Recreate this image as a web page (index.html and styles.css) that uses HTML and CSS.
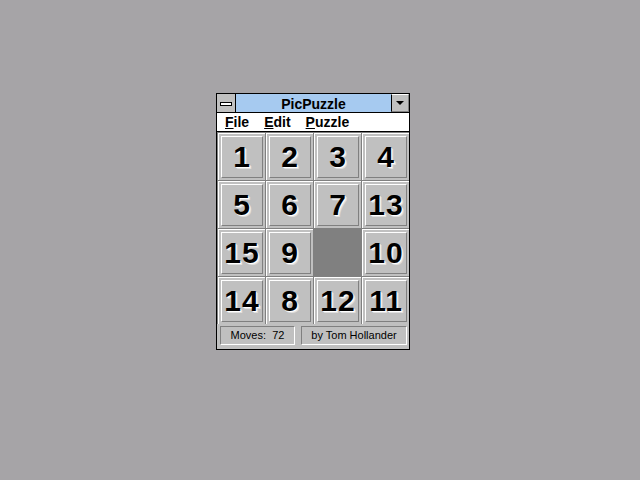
FILE: index.html
```html
<!DOCTYPE html>
<html>
  <head>
    <title>PicPuzzle</title>
    <link rel="stylesheet" href="styles.css">
  </head>
  <body>
    <div class="window">
      <div class="titlebar">
        <div class="sysmenu"><span class="sysbar"></span></div>
        <div class="title">PicPuzzle</div>
        <div class="minbtn"><span class="arrow"></span></div>
      </div>
      <div class="menubar">
        <span class="menu-item"><u>F</u>ile</span>
        <span class="menu-item"><u>E</u>dit</span>
        <span class="menu-item"><u>P</u>uzzle</span>
      </div>
      <div class="board">
        <div class="cell"><div class="tile">1</div></div>
        <div class="cell"><div class="tile">2</div></div>
        <div class="cell"><div class="tile">3</div></div>
        <div class="cell"><div class="tile">4</div></div>
        <div class="cell"><div class="tile">5</div></div>
        <div class="cell"><div class="tile">6</div></div>
        <div class="cell"><div class="tile">7</div></div>
        <div class="cell"><div class="tile">13</div></div>
        <div class="cell"><div class="tile">15</div></div>
        <div class="cell"><div class="tile">9</div></div>
        <div class="cell empty"></div>
        <div class="cell"><div class="tile">10</div></div>
        <div class="cell"><div class="tile">14</div></div>
        <div class="cell"><div class="tile">8</div></div>
        <div class="cell"><div class="tile">12</div></div>
        <div class="cell"><div class="tile">11</div></div>
      </div>
      <div class="status">
        <div class="field moves">Moves:  72</div>
        <div class="field credit">by Tom Hollander</div>
      </div>
    </div>
  </body>
</html>
```

FILE: styles.css
```css
body {
  margin: 0;
  width: 640px;
  height: 480px;
  background: #a6a4a7;
  font-family: "Liberation Sans", Arial, sans-serif;
  position: relative;
}

/* the app window sits on the desktop */
.window {
  position: absolute;
  left: 216px;
  top: 93px;
  width: 192px;
  border: 1px solid #000;
  background: #c0c0c0;
}

.titlebar {
  display: flex;
  height: 18px;
  border-bottom: 1px solid #000;
}

.sysmenu {
  width: 15px;
  padding-left: 3px;
  border-right: 1px solid #000;
  background: #c0c0c0;
  display: flex;
  align-items: center;
}

.sysbar {
  display: block;
  width: 10px;
  height: 2px;
  border: 1px solid #000;
  background: #fff;
  margin-top: 1px;
}

.title {
  flex: 1;
  background: #a6caf0;
  text-align: center;
  font-size: 14px;
  font-weight: bold;
  line-height: 18px;
  padding-top: 1px;
  color: #000;
}

.minbtn {
  width: 16px;
  height: 16px;
  border-left: 1px solid #000;
  border-top: 1px solid #fff;
  border-right: 1px solid #808080;
  border-bottom: 1px solid #808080;
  background: #c0c0c0;
  display: flex;
  align-items: center;
  justify-content: center;
}

.arrow {
  width: 0;
  height: 0;
  border-left: 4px solid transparent;
  border-right: 4px solid transparent;
  border-top: 4px solid #000;
}

.menubar {
  height: 18px;
  background: #fff;
  border-bottom: 1px solid #000;
  display: flex;
  font-size: 14px;
  font-weight: bold;
  line-height: 18px;
}

.menu-item {
  padding: 0 8px;
}

.menu-item + .menu-item {
  padding-left: 7px;
}

.board {
  display: grid;
  grid-template-columns: repeat(4, 48px);
  grid-auto-rows: 48px;
}

.cell {
  box-sizing: border-box;
  border-left: 1px solid #808080;
  border-top: 1px solid #808080;
  padding: 3px 2px 2px 3px;
  box-shadow: inset 1px 1px 0 #fff;
}

.cell.empty {
  background: #808080;
  box-shadow: none;
}

.tile {
  box-sizing: border-box;
  width: 42px;
  height: 42px;
  border: 1px solid;
  border-color: #fff #808080 #808080 #fff;
  display: flex;
  align-items: center;
  justify-content: center;
  font-weight: bold;
  font-size: 30px;
  letter-spacing: 1px;
  color: #000;
  text-shadow: 1px 1px 0 #fff, 2px 2px 0 #e0e0e0;
}

.status {
  display: flex;
  gap: 6px;
  height: 25px;
  box-sizing: border-box;
  padding: 2px 2px 0 3px;
}

.field {
  box-sizing: border-box;
  height: 19px;
  border: 1px solid;
  border-color: #808080 #fff #fff #808080;
  font-size: 11px;
  line-height: 17px;
  text-align: center;
  white-space: pre;
}

.moves {
  width: 75px;
}

.credit {
  width: 106px;
}
```
